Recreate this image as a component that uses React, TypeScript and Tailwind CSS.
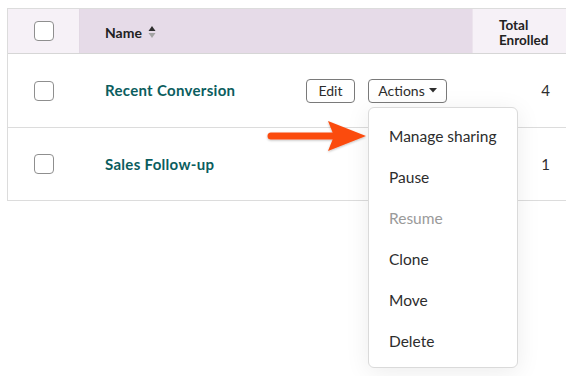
import React from 'react';

const font = { fontFamily: 'Lato, "Noto Sans", sans-serif' };

const Checkbox = () => (
    <div className="w-[20px] h-[20px] rounded-[4px] border-[1.5px] border-[#8f8f8f] bg-white" />
);

const SortIcon = () => (
    <svg width="8" height="14" viewBox="0 0 8 14" className="ml-[6px]">
        <path d="M4 1 L7.5 6 L0.5 6 Z" fill="#2e2e2e" />
        <path d="M4 13 L7.5 8 L0.5 8 Z" fill="#a3a3a3" />
    </svg>
);

const menu = [
    { label: 'Manage sharing' },
    { label: 'Pause' },
    { label: 'Resume', disabled: true },
    { label: 'Clone' },
    { label: 'Move' },
    { label: 'Delete' },
];

export default function App() {
    return (
        <div className="relative w-[566px] h-[376px] bg-white overflow-hidden text-[#2d2d2d]" style={font}>
            <div className="ml-[7px] mt-[8px] w-[580px] border-t border-l border-b border-[#dcdcdc]">
                {/* header */}
                <div className="flex h-[45px] border-b border-[#d6d6d6]">
                    <div className="w-[72px] bg-[#f6f1f7] flex items-center justify-center border-r border-[#e2d8e4]">
                        <Checkbox />
                    </div>
                    <div className="w-[392px] bg-[#e6dbe8] flex items-center pl-[25px] pt-[2px]">
                        <span className="text-[14px] font-bold text-[#222]">Name</span>
                        <SortIcon />
                    </div>
                    <div className="flex-1 bg-[#f6f1f7] flex flex-col justify-center pl-[26px] pt-[4px] border-l border-[#ece4ed]">
                        <span className="text-[13.5px] font-bold leading-[15px] text-[#222]">Total</span>
                        <span className="text-[13.5px] font-bold leading-[15px] text-[#222]">Enrolled</span>
                    </div>
                </div>
                {/* row 1 */}
                <div className="flex h-[74px] border-b border-[#dcdcdc]">
                    <div className="w-[72px] flex items-center justify-center">
                        <Checkbox />
                    </div>
                    <div className="w-[392px] flex items-center pl-[25px] pr-[25px]">
                        <span className="text-[15px] font-bold text-[#0b5d5e] tracking-[0.3px]">Recent Conversion</span>
                        <div className="ml-auto flex items-center gap-[13px]">
                            <button className="h-[24px] w-[49px] rounded-[4px] border border-[#7a7a7a] text-[14px] text-[#2d2d2d]">Edit</button>
                            <button className="h-[24px] w-[79px] rounded-[4px] border border-[#7a7a7a] text-[14px] text-[#2d2d2d] flex items-center justify-center gap-[4px]">
                                Actions
                                <svg width="8" height="5" viewBox="0 0 8 5">
                                    <path d="M0 0 L8 0 L4 4.5 Z" fill="#2d2d2d" />
                                </svg>
                            </button>
                        </div>
                    </div>
                    <div className="w-[95px] flex items-center justify-end pr-[17px] text-[15px]">4</div>
                </div>
                {/* row 2 */}
                <div className="flex h-[72px]">
                    <div className="w-[72px] flex items-center justify-center">
                        <Checkbox />
                    </div>
                    <div className="w-[392px] flex items-center pl-[25px]">
                        <span className="text-[15px] font-bold text-[#0b5d5e] tracking-[0.3px]">Sales Follow-up</span>
                    </div>
                    <div className="w-[95px] flex items-center justify-end pr-[17px] text-[15px]">1</div>
                </div>
            </div>

            {/* dropdown menu */}
            <div className="absolute left-[368px] top-[107px] w-[150px] h-[261px] bg-white rounded-[6px] border border-[#dadada] shadow-[0_4px_24px_rgba(0,0,0,0.08)] pt-[8px]">
                {menu.map((m) => (
                    <div
                        key={m.label}
                        className={`h-[41px] flex items-center pl-[20px] text-[15.5px] ${m.disabled ? 'text-[#9a9a9a]' : 'text-[#2d2d2d]'}`}
                    >
                        {m.label}
                    </div>
                ))}
            </div>

            {/* pointer arrow */}
            <svg className="absolute left-[264px] top-[119px]" width="106" height="36" viewBox="0 0 106 36">
                <defs>
                    <filter id="s" x="-10%" y="-30%" width="120%" height="160%">
                        <feDropShadow dx="0" dy="1" stdDeviation="1" floodColor="#000" floodOpacity="0.25" />
                    </filter>
                </defs>
                <g filter="url(#s)">
                    <line x1="7" y1="17" x2="72" y2="17" stroke="#fb4b10" strokeWidth="7" strokeLinecap="round" />
                    <path d="M64 2 L102 17 L64 32 L70 17 Z" fill="#fb4b10" />
                </g>
            </svg>
        </div>
    );
}
